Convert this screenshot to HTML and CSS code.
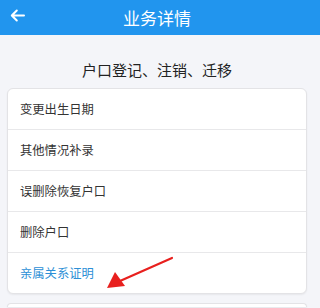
FILE: index.html
```html
<!DOCTYPE html>
<html lang="zh-CN">
<head>
<meta charset="utf-8">
<link rel="stylesheet" href="styles.css">
</head>
<body>
<header class="topbar">
  <svg class="back" width="15" height="13" viewBox="0 0 15 13"><path d="M14 6.5H2M6.8 1.5L1.8 6.5l5 5" fill="none" stroke="#fff" stroke-width="2" stroke-linecap="round" stroke-linejoin="round"/></svg>
  <h1 class="title">业务详情</h1>
</header>
<main class="content">
  <h2 class="section-title">户口登记、注销、迁移</h2>
  <div class="card">
    <div class="row">变更出生日期</div>
    <div class="row">其他情况补录</div>
    <div class="row">误删除恢复户口</div>
    <div class="row">删除户口</div>
    <div class="row row-active">亲属关系证明
      <svg class="pointer" width="80" height="40" viewBox="0 0 80 40"><line x1="74" y1="3" x2="22" y2="26" stroke="#e8201e" stroke-width="2.2" stroke-linecap="round"/><polygon points="9,33 17,17 27,31" fill="#e8201e"/></svg>
    </div>
  </div>
  <div class="card card-next"></div>
</main>
</body>
</html>
```
FILE: styles.css
```css
html, body {
  margin: 0;
  padding: 0;
}
body {
  width: 320px;
  height: 308px;
  overflow: hidden;
  background: #f4f5f9;
  font-family: "Noto Sans CJK SC", "Noto Sans", sans-serif;
}
.topbar {
  position: relative;
  height: 35px;
  background: #2195ee;
  display: flex;
  align-items: center;
  justify-content: center;
  padding-right: 6px;
}
.back {
  position: absolute;
  left: 10px;
  top: 9px;
}
.title {
  margin: 0;
  font-size: 17px;
  font-weight: 400;
  color: #fff;
  line-height: 20px;
}
.content {
  padding: 0 13px 0 7px;
}
.section-title {
  margin: 0;
  padding-top: 24px;
  height: 29px;
  line-height: 22px;
  font-size: 15px;
  font-weight: 400;
  color: #222;
  text-align: center;
}
.card {
  background: #fff;
  border: 1px solid #e3e3e6;
  border-radius: 6px;
  box-shadow: 0 1px 2px rgba(0,0,0,0.06);
  overflow: hidden;
}
.row {
  position: relative;
  height: 40px;
  line-height: 40px;
  padding-left: 12px;
  font-size: 12.3px;
  color: #333;
  border-bottom: 1px solid #e8e8ea;
}
.row:last-child {
  border-bottom: 0;
}
.row-active {
  color: #2c8fd6;
}
.pointer {
  position: absolute;
  left: 90px;
  top: 2px;
}
.card-next {
  margin-top: 9px;
  height: 3px;
  border-bottom: 0;
  border-radius: 6px 6px 0 0;
}
```
